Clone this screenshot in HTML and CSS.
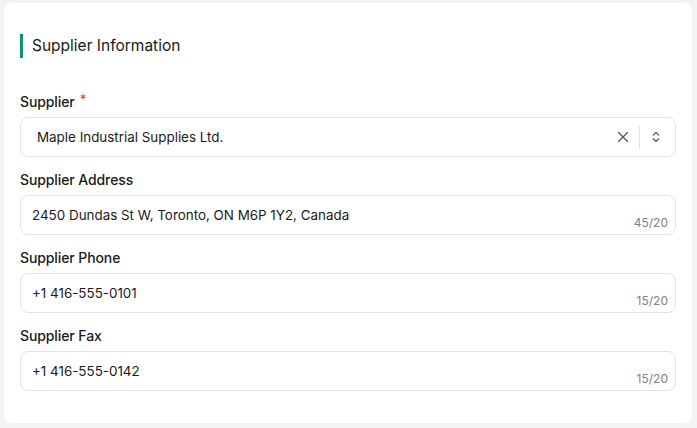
FILE: index.html
```html
<!DOCTYPE html>
<html lang="en">

<head>
    <meta charset="UTF-8">
    <meta name="viewport" content="width=device-width, initial-scale=1.0">
    <title>Supplier Information</title>
    <link rel="stylesheet" href="styles.css">
</head>

<body>
    <section class="card">
        <h2 class="sectionTitle">Supplier Information</h2>
        <div class="field">
            <label class="fieldLabel">Supplier<span class="required">*</span></label>
            <div class="selectBox">
                <span class="selectValue">Maple Industrial Supplies Ltd.</span>
                <span class="selectActions">
                    <svg class="clearIcon" width="12" height="12" viewBox="0 0 12 12">
                        <path d="M1.5 1.5 L10.5 10.5 M10.5 1.5 L1.5 10.5" stroke="#555" stroke-width="1.3" fill="none" stroke-linecap="round" />
                    </svg>
                    <span class="divider"></span>
                    <svg class="arrowIcon" width="8" height="12" viewBox="0 0 8 12">
                        <path d="M1.3 4.2 L4 1.5 L6.7 4.2 M1.3 7.8 L4 10.5 L6.7 7.8" stroke="#555" stroke-width="1.2" fill="none" stroke-linecap="round" stroke-linejoin="round" />
                    </svg>
                </span>
            </div>
        </div>
        <div class="field">
            <label class="fieldLabel">Supplier Address</label>
            <div class="inputBox">
                <span class="inputValue">2450 Dundas St W, Toronto, ON M6P 1Y2, Canada</span>
                <span class="counter">45/20</span>
            </div>
        </div>
        <div class="field">
            <label class="fieldLabel">Supplier Phone</label>
            <div class="inputBox">
                <span class="inputValue">+1 416-555-0101</span>
                <span class="counter">15/20</span>
            </div>
        </div>
        <div class="field">
            <label class="fieldLabel">Supplier Fax</label>
            <div class="inputBox">
                <span class="inputValue">+1 416-555-0142</span>
                <span class="counter">15/20</span>
            </div>
        </div>
    </section>
</body>

</html>
```

FILE: styles.css
```css
html {
    background-color: #f3f3f5;
}

body {
    margin: 0;
    font-family: Inter, "Noto Sans", sans-serif;
    color: #1a1a1a;
}

.card {
    margin: 3px 5px 0 4px;
    background-color: white;
    border-radius: 8px;
    padding: 31px 16px 32px 16px;
}

.sectionTitle {
    margin: 0 0 34px 0;
    height: 24px;
    line-height: 24px;
    font-size: 15.5px;
    font-weight: 400;
    border-left: 3px solid #0b9467;
    padding-left: 9px;
}

.field {
    margin-bottom: 13px;
}

.field:last-child {
    margin-bottom: 0;
}

.fieldLabel {
    display: block;
    height: 20px;
    line-height: 20px;
    margin-bottom: 5px;
    font-size: 14px;
    font-weight: 500;
    letter-spacing: -0.1px;
}

.required {
    color: #f04444;
    margin-left: 5px;
    font-size: 13px;
    position: relative;
    top: -3px;
}

.selectBox,
.inputBox {
    height: 40px;
    box-sizing: border-box;
    border: 1px solid #e3e3e6;
    border-radius: 8px;
    display: flex;
    align-items: center;
    font-size: 13.4px;
}

.selectBox {
    padding: 0 12px 0 16px;
}

.selectValue {
    flex: 1;
}

.selectActions {
    display: flex;
    align-items: center;
}

.divider {
    width: 1px;
    height: 23px;
    background-color: #e6e6e8;
    margin: 0 12px 0 10px;
}

.arrowIcon {
    margin-right: 3px;
}

.inputBox {
    position: relative;
    padding: 0 11px;
}

.counter {
    position: absolute;
    right: 7px;
    bottom: 4px;
    font-size: 12px;
    color: #85807b;
}
```
